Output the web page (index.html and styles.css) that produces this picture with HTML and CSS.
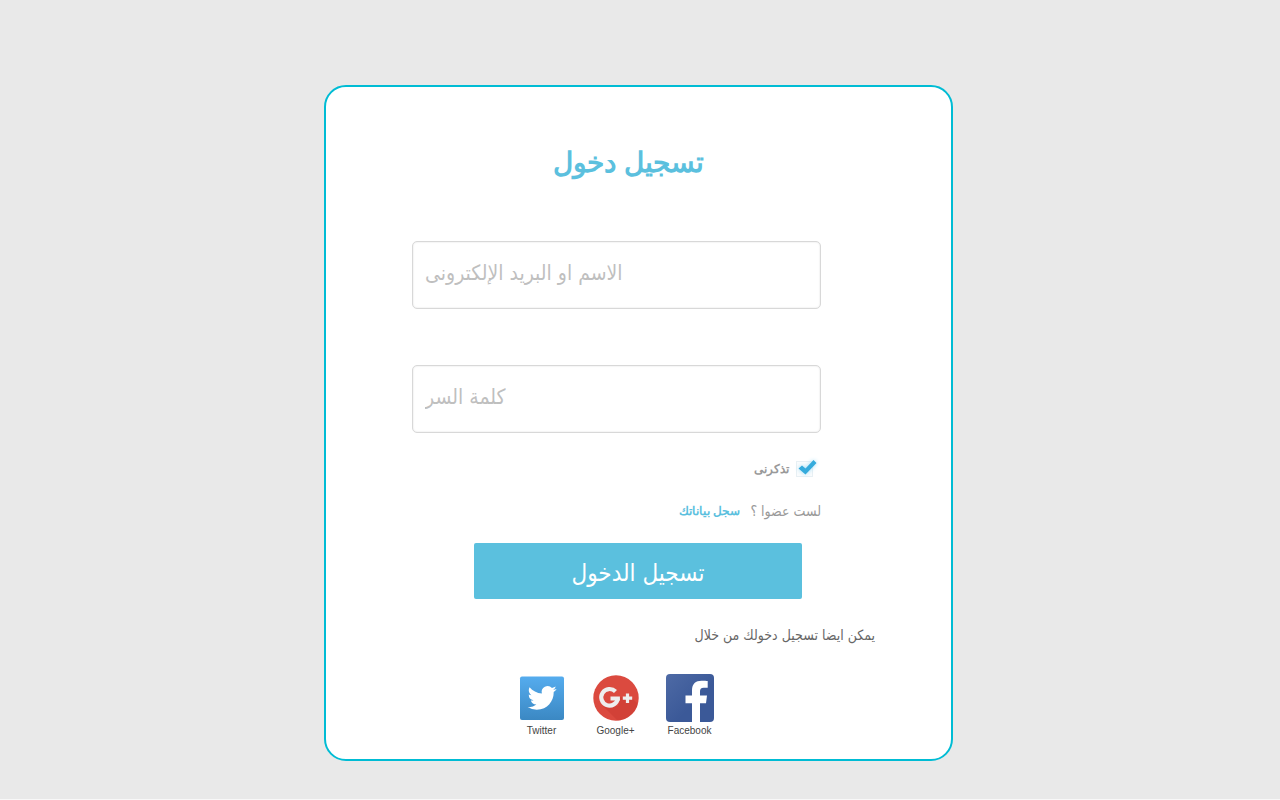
FILE: index.html
```html
<!DOCTYPE html>
<html lang="ar">
<head>
<meta charset="utf-8">
<meta name="viewport" content="width=device-width, initial-scale=1">
<title>تسجيل دخول</title>
<link rel="stylesheet" href="styles.css">
</head>
<body>
<main class="card">
  <form class="login">
    <h1 class="title" dir="rtl">تسجيل دخول</h1>
    <input class="field" type="text" aria-label="الاسم او البريد الإلكترونى" placeholder="الاسم او البريد الإلكترونى">
    <input class="field" type="password" aria-label="كلمة السر" placeholder="كلمة السر">
    <div class="remember" dir="rtl">
      <span class="check">
        <input class="check-box" type="checkbox" id="remember" checked>
        <svg class="check-mark" viewBox="0 0 24 20" aria-hidden="true"><path d="M3.500 9.500 7 6.500l3.500 3L18.500 1 21.500 4 10.500 15.500Z" fill="#35abdc"/></svg>
      </span>
      <label class="remember-label" for="remember">تذكرنى</label>
    </div>
    <p class="register" dir="rtl"><span>لست عضوا ؟</span><a class="register-link" href="#register">سجل بياناتك</a></p>
    <button class="submit" type="submit" dir="rtl">تسجيل الدخول</button>
  </form>
  <p class="also" dir="rtl">يمكن ايضا تسجيل دخولك من خلال</p>
  <nav class="social">
    <a class="social-link" href="#twitter">
      <svg class="social-icon" viewBox="0 0 48 48" aria-hidden="true">
        <defs><linearGradient id="tw" x1="0" y1="0" x2="0" y2="1"><stop offset="0" stop-color="#55acee"/><stop offset="1" stop-color="#3b88c3"/></linearGradient></defs>
        <rect x="2" y="2.500" width="44" height="43.500" rx="2" fill="url(#tw)"/>
        <path transform="translate(9.600 9.400) scale(1.210)" fill="#fff" d="M23.953 4.570a10 10 0 0 1-2.825.775 4.958 4.958 0 0 0 2.163-2.723c-.951.555-2.005.959-3.127 1.184a4.920 4.920 0 0 0-8.384 4.482C7.690 8.095 4.067 6.130 1.640 3.162a4.822 4.822 0 0 0-.666 2.475c0 1.710.870 3.213 2.188 4.096a4.904 4.904 0 0 1-2.228-.616v.060a4.923 4.923 0 0 0 3.946 4.827 4.996 4.996 0 0 1-2.212.085 4.936 4.936 0 0 0 4.604 3.417 9.867 9.867 0 0 1-6.102 2.105c-.390 0-.779-.023-1.170-.067a13.995 13.995 0 0 0 7.557 2.209c9.053 0 13.998-7.496 13.998-13.985 0-.210 0-.420-.015-.630a9.935 9.935 0 0 0 2.460-2.548z"/>
      </svg>
      <span>Twitter</span>
    </a>
    <a class="social-link" href="#google">
      <svg class="social-icon" viewBox="0 0 48 48" aria-hidden="true">
        <defs><clipPath id="gc"><circle cx="24" cy="24" r="22.700"/></clipPath></defs>
        <circle cx="24" cy="24" r="22.700" fill="#db4a3f"/>
        <path clip-path="url(#gc)" d="M10.500 31.500 28 49H48V32L40 24 28 23 26 32Z" fill="#c8372f" opacity=".45"/>
        <path d="M23.500 17.500A8.300 8.300 0 1 0 25.800 24.400" fill="none" stroke="#eee" stroke-width="4.200"/>
        <path d="M18.500 22.400h9.400v4H18.500zM33.900 19.500h3.200v3.100h3.100v3.200h-3.100v3.200h-3.200v-3.200h-3.100v-3.200h3.100z" fill="#eee"/>
      </svg>
      <span>Google+</span>
    </a>
    <a class="social-link" href="#facebook">
      <svg class="social-icon" viewBox="0 0 48 48" aria-hidden="true">
        <defs><linearGradient id="fb" x1="0" y1="0" x2=".6" y2=".6"><stop offset="0" stop-color="#4e6aa5"/><stop offset="1" stop-color="#3b5998"/></linearGradient></defs>
        <rect width="48" height="48" rx="4" fill="url(#fb)"/>
        <path d="M26 48V29.200H19.500V21.500h6.500v-5.300c0-6.300 3.700-9.400 9.500-9.400 2.600 0 5 .2 6.200.3v6.700h-4c-2.900 0-3.700 1.500-3.700 3.700v4h7l-1 7.700h-6V48Z" fill="#fff"/>
      </svg>
      <span>Facebook</span>
    </a>
  </nav>
</main>
</body>
</html>
```
FILE: styles.css
```css
* { box-sizing: border-box; }

body {
  margin: 0;
  min-height: 100vh;
  padding: 85px 19px 38px 16px;
  background: #e9e9e9;
  border-bottom: 1px solid #f8f8f8;
  font-family: "DejaVu Sans Condensed", "DejaVu Sans", sans-serif;
  color: #999;
}

.card {
  width: 100%;
  max-width: 629px;
  margin: 0 auto;
  padding: 52px 76px 22px 86px;
  background: #fff;
  border: 2px solid #00bcd4;
  border-radius: 22px;
}

.login {
  display: flex;
  flex-direction: column;
  padding-right: 54px;
}

.title {
  margin: 0 0 54px;
  padding-left: 24px;
  text-align: center;
  font-family: "Liberation Sans", Arial, sans-serif;
  font-size: 28px;
  line-height: 48px;
  color: #5bc0de;
}

.field {
  width: 100%;
  height: 68px;
  margin-bottom: 56px;
  padding: 0 12px 4px;
  border: 1px solid #d8d8d8;
  border-radius: 5px;
  box-shadow: inset 0 0 2px #ddd;
  font: 21px "DejaVu Sans Condensed", "DejaVu Sans", sans-serif;
}

.field::placeholder { color: #bfbfbf; }

.field + .remember { margin-top: -32px; }

.remember {
  display: flex;
  align-items: center;
  gap: 6px;
  height: 24px;
}

.check {
  position: relative;
  width: 26px;
  height: 20px;
}

.check-box {
  appearance: none;
  position: absolute;
  left: 1px;
  top: 2px;
  width: 17px;
  height: 16px;
  margin: 0;
  border: 1px solid #e8f0f4;
  background: #fafcfd;
}

.check-mark {
  position: absolute;
  left: 0;
  top: 0;
  width: 24px;
  height: 20px;
  pointer-events: none;
  filter: drop-shadow(0 0 2px #9edcf5);
}

.check-box:not(:checked) + .check-mark { display: none; }

.remember-label {
  font-family: "Liberation Sans", Arial, sans-serif;
  font-size: 12px;
  font-weight: bold;
}

.register {
  display: flex;
  gap: 10px;
  margin: 18px 0 20px;
  font-size: 14px;
  line-height: 24px;
}

.register-link {
  color: #5bc0de;
  font-family: "Liberation Sans", Arial, sans-serif;
  font-size: 12px;
  font-weight: bold;
  text-decoration: none;
}

.submit {
  height: 56px;
  margin-left: 62px;
  margin-right: 19px;
  padding: 4px 0 0;
  border: 0;
  border-radius: 2px;
  background: #5bc0de;
  color: #fff;
  font: 24px "DejaVu Sans Condensed", "DejaVu Sans", sans-serif;
}

.also {
  margin: 24px 0 27px;
  font-size: 14px;
  line-height: 24px;
  color: #666;
}

.social {
  display: flex;
  justify-content: center;
  gap: 14px;
  padding-right: 56px;
}

.social-link {
  display: flex;
  flex-direction: column;
  align-items: center;
  gap: 3px;
  width: 60px;
  font-family: "Liberation Sans", Arial, sans-serif;
  font-size: 10px;
  line-height: 12px;
  color: #444;
  text-decoration: none;
}

.social-icon {
  width: 48px;
  height: 48px;
}
```
